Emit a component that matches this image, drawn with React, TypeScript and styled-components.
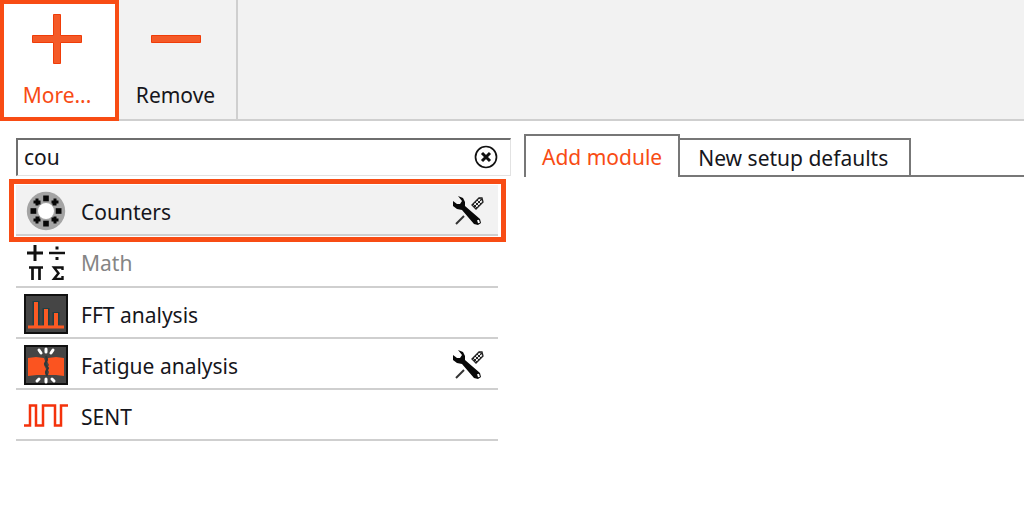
import React, { useState } from "react";
import styled, { createGlobalStyle } from "styled-components";

const accent = "#f84c14";
const line = "#cfcfcf";

const GlobalStyle = createGlobalStyle`
  * { box-sizing: border-box; }
  body { margin: 0; background: #fff; }
  body, button, input {
    font-family: "Noto Sans", "Open Sans", sans-serif;
    font-size: 21px;
    line-height: 28px;
    color: #16161c;
  }
  svg { display: block; flex: none; }
`;

const Page = styled.div`
  min-height: 100vh;
`;

const Toolbar = styled.header`
  display: flex;
  background: #f2f2f2;
  border-bottom: 2px solid ${line};
`;

const ToolButton = styled.button<{ $active?: boolean }>`
  display: flex;
  flex-direction: column;
  align-items: center;
  gap: 17px;
  width: 119px;
  margin: 0 0 ${(p) => (p.$active ? "-2px" : "0")};
  padding: ${(p) => (p.$active ? "10px 5px 6px 0" : "14px 4px 10px 0")};
  background: ${(p) => (p.$active ? "#fff" : "transparent")};
  border: ${(p) => (p.$active ? `4px solid ${accent}` : "0 solid")};
  border-right: ${(p) => (p.$active ? `4px solid ${accent}` : `2px solid ${line}`)};
  color: ${(p) => (p.$active ? accent : "inherit")};
`;

const Body = styled.main`
  display: flex;
  gap: 13px;
  padding: 13px 0 0 16px;
`;

const ModulePanel = styled.section`
  flex: none;
  width: 495px;
  padding-top: 4px;
`;

const SearchBox = styled.div`
  display: flex;
  align-items: center;
  height: 38px;
  padding: 0 12px 2px 6px;
  border: 1px solid #e2e2e2;
  border-top: 2px solid #6e6e6e;
  border-left: 2px solid #6e6e6e;
`;

const SearchInput = styled.input`
  flex: 1;
  min-width: 0;
  padding: 0;
  border: 0;
  outline: 0;
  background: transparent;
`;

const ClearButton = styled.button`
  padding: 0;
  border: 0;
  background: transparent;
`;

const ModuleList = styled.ul`
  width: 482px;
  margin: 9px 0 0;
  padding: 0;
  list-style: none;
`;

const ModuleItem = styled.li<{ $selected?: boolean }>`
  position: relative;
  background: ${(p) => (p.$selected ? "#f2f2f2" : "#fff")};
  border-bottom: 2px solid ${line};

  &::after {
    content: "";
    display: ${(p) => (p.$selected ? "block" : "none")};
    position: absolute;
    inset: -6px -8px -8px -7px;
    border: 5px solid ${accent};
    pointer-events: none;
    z-index: 1;
  }
`;

const ModuleButton = styled.button<{ $muted?: boolean }>`
  display: flex;
  align-items: center;
  gap: 13px;
  width: 100%;
  height: ${(p) => (p.$muted ? "50px" : "49px")};
  padding: 2px 13px 0 8px;
  border: 0;
  background: transparent;
  text-align: left;
  color: ${(p) => (p.$muted ? "#858585" : "inherit")};
`;

const ModuleName = styled.span`
  flex: 1;
  padding-top: 2px;
`;

const SetupPanel = styled.section`
  flex: 1;
  min-width: 0;
`;

const TabBar = styled.div`
  display: flex;
  align-items: flex-end;
`;

const Tab = styled.button<{ $active?: boolean }>`
  height: ${(p) => (p.$active ? "43px" : "39px")};
  padding: ${(p) => (p.$active ? "0 16px" : "0 21px 0 18px")};
  border: 2px solid #777;
  border-bottom-width: ${(p) => (p.$active ? "0" : "2px")};
  border-left-width: ${(p) => (p.$active ? "2px" : "0")};
  background: #fff;
  color: ${(p) => (p.$active ? accent : "inherit")};
  white-space: nowrap;
`;

const TabRule = styled.div`
  flex: 1;
  border-bottom: 2px solid #777;
`;

const PlusIcon = () => (
  <svg width="50" height="50" viewBox="0 0 50 50" fill="#f45a28" stroke="#f03c08" aria-hidden="true">
    <path d="M21.5 .5h7v21h21v7h-21v21h-7v-21h-21v-7h21z" />
  </svg>
);

const MinusIcon = () => (
  <svg width="50" height="50" viewBox="0 0 50 50" fill="#f45a28" stroke="#f03c08" aria-hidden="true">
    <path d="M.5 21.5h49v7H.5z" />
  </svg>
);

const ClearIcon = () => (
  <svg width="24" height="24" viewBox="0 0 24 24" fill="none" stroke="#111" aria-hidden="true">
    <circle cx="12" cy="12" r="10.5" strokeWidth="1.7" />
    <path d="M8 8l8 8M16 8l-8 8" strokeWidth="3" />
  </svg>
);

const CountersIcon = () => (
  <svg width="44" height="44" viewBox="0 0 44 44" aria-hidden="true">
    <circle cx="22" cy="22" r="19.2" fill="#a4a4a4" />
    <circle cx="22" cy="22" r="8" fill="#fff" />
    {[0, 90, 180, 270].map((angle) => (
      <g key={angle} fill="#080808" transform={`rotate(${angle} 22 22)`}>
        <rect x="19.2" y="6.5" width="5.6" height="5.8" />
        <path d="M29.500 9.500h3v2h2v3h-2v2h-4v-2h-1v-3h2z" />
      </g>
    ))}
  </svg>
);

const MathIcon = () => (
  <svg width="44" height="44" viewBox="0 -2 44 44" fill="none" stroke="#111" aria-hidden="true">
    <path d="M3 11h16M11 3v16" strokeWidth="3" />
    <path d="M25 11h16" strokeWidth="2.5" />
    <path d="M31.5 6h3M31.5 16.5h3" strokeWidth="3" />
    <path d="M5 25.5h14M8.5 25v13M15.5 25v13" strokeWidth="2.7" />
    <path d="M38.5 28v-2.5H30l4.500 5.700-4.500 5.700h8.500V34" strokeWidth="2.4" />
  </svg>
);

const FftIcon = () => (
  <svg width="44" height="40" viewBox="0 0 44 40" aria-hidden="true">
    <path fill="#454545" stroke="#111" strokeWidth="2" d="M1 1h42v38H1z" />
    <path fill="none" stroke="#203f43" strokeWidth="7" d="M12 7v24M22 14v17M32 18v13" />
    <path fill="none" stroke="#fb5a24" strokeWidth="4" d="M12 8v24M22 15v17M32 19v13" />
    <path stroke="#fb5a24" strokeWidth="3" d="M4 33h36" />
  </svg>
);

const FatigueIcon = () => (
  <svg width="44" height="40" viewBox="0 0 44 40" aria-hidden="true">
    <path fill="#454545" stroke="#111" strokeWidth="2" d="M1 1h42v38H1z" />
    <path fill="#fb5420" d="M4 13l8-1 8 1 1 3-1 4 2 4-1 4 1 2-9 0-9 1zM40 13l-8-1-8 1-1 3 2 4-2 3 2 4-1 3 8 0 8 1z" />
    <path fill="none" stroke="#303838" strokeWidth="2" d="M22 11l1 4-2 4 3 4-2 4 1 4" />
    <path stroke="#fff" strokeWidth="3" strokeLinecap="round" d="M22 4v3M15 5l2 3M29 5l-2 3M22 34v3M13 36l2-2M30 36l-2-2" />
  </svg>
);

const SentIcon = () => (
  <svg width="44" height="44" viewBox="0 0 44 44" aria-hidden="true">
    <path fill="none" stroke="#f4320b" strokeWidth="2.5" d="M0 31.500h6v-20h6v20h7v-20h12v20h6v-20h7" />
  </svg>
);

const ToolsIcon = () => (
  <svg width="34" height="32" viewBox="0 0 34 32" aria-hidden="true">
    <path d="M5 29l8-8" stroke="#333" strokeWidth="2" />
    <path d="M21 10l7-7 3 0 1 4-7 7z" fill="#eee" stroke="#222" strokeWidth="1.3" />
    <path d="M22 9l4 4M24 7l4 4M26 5l4 4M28 3l4 3M23 12l8-8" stroke="#222" />
    <path fill="#080808" d="M7 1l5 2 2 4 0 4 15 13 1 4-3 2-4-1L11 15l-5-1-4-3 0-5 4 3 3 0 2-3z" />
    <path d="M27 25l1 3" stroke="#fff" strokeWidth="2" />
  </svg>
);

type Module = { name: string; icon: React.ReactNode; tools?: boolean; muted?: boolean };

const modules: Module[] = [
  { name: "Counters", icon: <CountersIcon />, tools: true },
  { name: "Math", icon: <MathIcon />, muted: true },
  { name: "FFT analysis", icon: <FftIcon /> },
  { name: "Fatigue analysis", icon: <FatigueIcon />, tools: true },
  { name: "SENT", icon: <SentIcon /> },
];

export default function App() {
  const [query, setQuery] = useState("cou");
  const [selected, setSelected] = useState("Counters");

  return (
    <Page>
      <GlobalStyle />
      <Toolbar>
        <ToolButton $active>
          <PlusIcon />
          More...
        </ToolButton>
        <ToolButton>
          <MinusIcon />
          Remove
        </ToolButton>
      </Toolbar>
      <Body>
        <ModulePanel>
          <SearchBox>
            <SearchInput aria-label="Search modules" value={query} onChange={(e) => setQuery(e.target.value)} />
            <ClearButton aria-label="Clear search" onClick={() => setQuery("")}>
              <ClearIcon />
            </ClearButton>
          </SearchBox>
          <ModuleList>
            {modules.map((m) => (
              <ModuleItem key={m.name} $selected={m.name === selected}>
                <ModuleButton $muted={m.muted} onClick={() => setSelected(m.name)}>
                  {m.icon}
                  <ModuleName>{m.name}</ModuleName>
                  {m.tools && <ToolsIcon />}
                </ModuleButton>
              </ModuleItem>
            ))}
          </ModuleList>
        </ModulePanel>
        <SetupPanel>
          <TabBar role="tablist">
            <Tab role="tab" aria-selected="true" $active>
              Add module
            </Tab>
            <Tab role="tab" aria-selected="false">
              New setup defaults
            </Tab>
            <TabRule />
          </TabBar>
        </SetupPanel>
      </Body>
    </Page>
  );
}
